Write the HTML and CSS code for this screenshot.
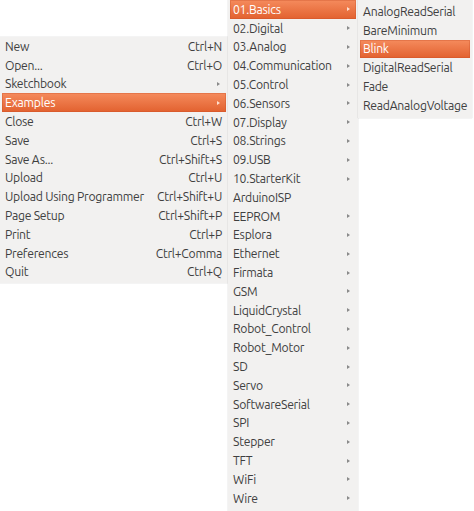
FILE: index.html
```html
<!DOCTYPE html>
<html>
<head>
<meta charset="utf-8">
<link rel="stylesheet" href="styles.css">
</head>
<body>
<div class="menu main">
  <div class="item"><span>New</span><span class="sc">Ctrl+N</span></div>
  <div class="item"><span>Open...</span><span class="sc">Ctrl+O</span></div>
  <div class="item"><span>Sketchbook</span><i class="arr"></i></div>
  <div class="item hl"><span>Examples</span><i class="arr"></i></div>
  <div class="item"><span>Close</span><span class="sc">Ctrl+W</span></div>
  <div class="item"><span>Save</span><span class="sc">Ctrl+S</span></div>
  <div class="item"><span>Save As...</span><span class="sc">Ctrl+Shift+S</span></div>
  <div class="item"><span>Upload</span><span class="sc">Ctrl+U</span></div>
  <div class="item"><span>Upload Using Programmer</span><span class="sc">Ctrl+Shift+U</span></div>
  <div class="item"><span>Page Setup</span><span class="sc">Ctrl+Shift+P</span></div>
  <div class="item"><span>Print</span><span class="sc">Ctrl+P</span></div>
  <div class="item"><span>Preferences</span><span class="sc">Ctrl+Comma</span></div>
  <div class="item"><span>Quit</span><span class="sc">Ctrl+Q</span></div>
</div>

<div class="menu examples">
  <div class="item hl"><span>01.Basics</span><i class="arr"></i></div>
  <div class="item"><span>02.Digital</span><i class="arr"></i></div>
  <div class="item"><span>03.Analog</span><i class="arr"></i></div>
  <div class="item"><span>04.Communication</span><i class="arr"></i></div>
  <div class="item"><span>05.Control</span><i class="arr"></i></div>
  <div class="item"><span>06.Sensors</span><i class="arr"></i></div>
  <div class="item"><span>07.Display</span><i class="arr"></i></div>
  <div class="item"><span>08.Strings</span><i class="arr"></i></div>
  <div class="item"><span>09.USB</span><i class="arr"></i></div>
  <div class="item"><span>10.StarterKit</span><i class="arr"></i></div>
  <div class="item"><span>ArduinoISP</span></div>
  <div class="item"><span>EEPROM</span><i class="arr"></i></div>
  <div class="item"><span>Esplora</span><i class="arr"></i></div>
  <div class="item"><span>Ethernet</span><i class="arr"></i></div>
  <div class="item"><span>Firmata</span><i class="arr"></i></div>
  <div class="item"><span>GSM</span><i class="arr"></i></div>
  <div class="item"><span>LiquidCrystal</span><i class="arr"></i></div>
  <div class="item"><span>Robot_Control</span><i class="arr"></i></div>
  <div class="item"><span>Robot_Motor</span><i class="arr"></i></div>
  <div class="item"><span>SD</span><i class="arr"></i></div>
  <div class="item"><span>Servo</span><i class="arr"></i></div>
  <div class="item"><span>SoftwareSerial</span><i class="arr"></i></div>
  <div class="item"><span>SPI</span><i class="arr"></i></div>
  <div class="item"><span>Stepper</span><i class="arr"></i></div>
  <div class="item"><span>TFT</span><i class="arr"></i></div>
  <div class="item"><span>WiFi</span><i class="arr"></i></div>
  <div class="item"><span>Wire</span><i class="arr"></i></div>
</div>

<div class="menu basics">
  <div class="item"><span>AnalogReadSerial</span></div>
  <div class="item"><span>BareMinimum</span></div>
  <div class="item hl"><span>Blink</span></div>
  <div class="item"><span>DigitalReadSerial</span></div>
  <div class="item"><span>Fade</span></div>
  <div class="item"><span>ReadAnalogVoltage</span></div>
</div>
</body>
</html>
```
FILE: styles.css
```css
html, body {
  margin: 0;
  padding: 0;
  background: #ffffff;
  width: 474px;
  height: 511px;
  overflow: hidden;
  position: relative;
}
body {
  font-family: Ubuntu, "Noto Sans", "DejaVu Sans", sans-serif;
  font-size: 12.2px;
  letter-spacing: -0.25px;
  color: #3f3f3f;
}
.menu {
  position: absolute;
  background: #f2f1f0;
  box-sizing: border-box;
  display: flex;
  flex-direction: column;
  box-shadow: 0 0 1px rgba(0,0,0,0.25);
}
.main {
  left: 0;
  top: 37px;
  width: 228px;
  padding: 0 2px 2px 2px;
}
.examples {
  left: 228px;
  top: -2px;
  width: 130px;
  height: 520px;
  padding: 2px 2px 0 2px;
}
.basics {
  left: 358px;
  top: 0;
  width: 114px;
  padding: 2px 2px 3px 2px;
}
.item {
  height: 18.8px;
  display: flex;
  align-items: center;
  justify-content: space-between;
  padding: 0 4px 0 3px;
  white-space: nowrap;
  box-sizing: border-box;
}
.sc {
  text-align: right;
}
.hl {
  background: linear-gradient(#f58b5d, #e2612f);
  color: #ffffff;
  box-shadow: inset 0 0 0 1px rgba(200,80,40,0.35);
}
.arr {
  display: block;
  width: 0;
  height: 0;
  border-left: 3px solid #8a8a8a;
  border-top: 2.5px solid transparent;
  border-bottom: 2.5px solid transparent;
  margin-right: 2px;
}
.hl .arr {
  border-left-color: #ffe0d0;
}
```
